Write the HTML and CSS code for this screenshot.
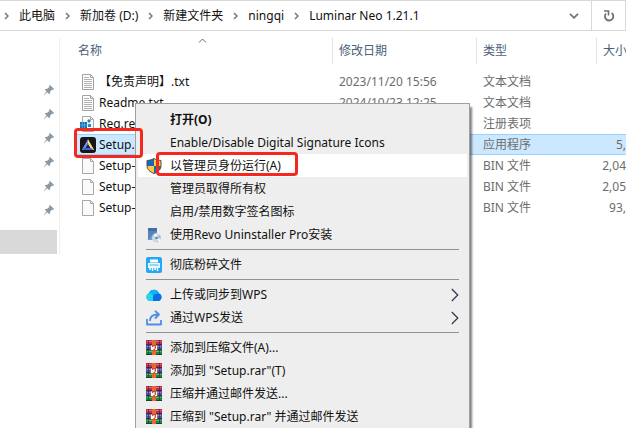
FILE: index.html
```html
<!DOCTYPE html>
<html lang="zh-CN">
<head>
<meta charset="utf-8">
<title>Luminar Neo 1.21.1</title>
<link rel="stylesheet" href="styles.css">
</head>
<body>
<svg class="defs" aria-hidden="true">
  <symbol id="crumb" viewBox="0 0 5 8"><path d="M1 1l3 3-3 3" fill="none" stroke="#777" stroke-width="1.5"/></symbol>
  <symbol id="pin" viewBox="0 0 10 10"><path d="M6 0l4 4-1 1-1-.2L6.200 6.600 6 8.600 5 9 3.300 7.200 .5 9.800 0 9.600 2.600 6.500 1 5l.4-1 2-.2L5.200 2 5 1z" fill="#8c98a3"/></symbol>
  <symbol id="text-file" viewBox="0 0 12 16"><path d="M.5.5h8l3 3v12H.5z" fill="#fdfdfd" stroke="#a2a2a2"/><path d="M8.500 .5v3h3" fill="none" stroke="#a2a2a2"/><path d="M2 3.500h5M2 5.500h8M2 7.500h8M2 9.500h8M2 11.500h8M2 13.500h8" stroke="#b0b0b0"/></symbol>
  <symbol id="blank-file" viewBox="0 0 12 16"><path d="M.5.5h8l3 3v12H.5z" fill="#fafafa" stroke="#a8a8a8"/><path d="M8.500 .5v3h3" fill="none" stroke="#a8a8a8"/></symbol>
  <symbol id="reg-file" viewBox="0 0 16 16"><path d="M2.500 .5h8l3 3v12h-11z" fill="#fafafa" stroke="#a8a8a8"/><path d="M10.500 .5v3h3" fill="none" stroke="#a8a8a8"/><path d="M0 6h7v6H0z" fill="#1174b4"/><path d="M7 5l2-2 2 2-2 2zM8 8h3v3H8z" fill="#1883c3"/><path d="M2.500 6v6M4.500 6v6M0 9h10" stroke="#75bce4" stroke-width=".6"/></symbol>
  <symbol id="luminar" viewBox="0 0 16 16"><rect width="16" height="16" rx="3" fill="#15171c"/><path d="M8 2.500l6 10.500H2z" fill="#f4d36c"/><path d="M8 2.500L2 13h4L9 5z" fill="#648eea"/><path d="M8 7L10.500 11h-5z" fill="#15204f"/><path d="M2 13l2-2h8l1 2z" fill="#3b62c5"/><path d="M8 2.500L14 13l-3-2-3-5z" fill="#ffe17c"/></symbol>
  <symbol id="shield" viewBox="0 0 16 16"><path d="M8 .5c2 1.300 4.500 1.800 7 2v5c0 4-3 6.500-7 8-4-1.500-7-4-7-8v-5c2.500-.2 5-.7 7-2z" fill="#ffc83d"/><path d="M8 .5v7.500H1V2.500c2.500-.2 5-.7 7-2zM8 8h7c-.2 4-3 6-7 7.500z" fill="#1769b8"/><path d="M8 .5c2 1.300 4.500 1.800 7 2v5c0 4-3 6.500-7 8-4-1.500-7-4-7-8v-5c2.500-.2 5-.7 7-2z" fill="none" stroke="#4c4c4c"/></symbol>
  <symbol id="revo" viewBox="0 0 16 16"><path d="M2 1h9v12H2z" fill="#5584bb"/><path d="M2 1h9v3H2z" fill="#426da5"/><path d="M2 13l6-7 3-1v8z" fill="#769bc8"/><circle cx="10.500" cy="11" r="4.500" fill="#cbd8ea"/><path d="M10.500 11L8 7.500l3-1zM10.500 11l4 2-1 2z" fill="#fff"/><path d="M10.500 11l3.500-3 1 3z" fill="#a2bada"/><circle cx="10.500" cy="11" r="1.300" fill="#6388b9"/></symbol>
  <symbol id="shred" viewBox="0 0 16 16"><rect width="16" height="16" rx="2" fill="#21aaf3"/><path d="M4 2.500h8v3H4z" fill="#fff"/><path d="M2 6h12v5H2z" fill="#e9f8ff"/><path d="M3.500 8h9" stroke="#45b8f5"/><path d="M4 10.500V13M6.500 10.500V14M9 10.500V13M11.500 10.500V14" stroke="#fff" stroke-width="1.500"/></symbol>
  <symbol id="cloud" viewBox="0 0 16 16"><path d="M4 14a4 4 0 0 1-1-7.700A5.300 5.300 0 0 1 13 6.500 3.900 3.900 0 0 1 12 14z" fill="#168cf2"/><path d="M4 14a4 4 0 0 1-1-7.700c4-1 5 1 8 7.700z" fill="#27d3ed"/><path d="M7 8.500c2-2.500 4-2.800 6-2A3.900 3.900 0 0 1 12 14H7z" fill="#0870e6"/><path d="M3 6.300A5.300 5.300 0 0 1 13 6.500c-3-.5-4.500.8-6 2.500-1-2-2-2.700-4-2.700z" fill="#16b2f0"/></symbol>
  <symbol id="share" viewBox="0 0 16 16"><path d="M1 9v5.500h14V10M4 11c0-4.500 3-6.500 8-6.500M9 .8l4 3.700-4 4" fill="none" stroke="#4c8eea" stroke-width="1.800" stroke-linejoin="round"/></symbol>
  <symbol id="rar" viewBox="0 0 16 16"><path d="M0 0h16v5H0z" fill="#c42c4c"/><path d="M0 5h16v5H0z" fill="#574fae"/><path d="M0 10h16v5H0z" fill="#178a3c"/><path d="M1 1.500h14" stroke="#e2688a"/><path d="M1 6.500h14" stroke="#958be0"/><path d="M1 11.500h14" stroke="#5bbd68"/><path d="M0 4.500h16M0 9.500h16M0 14.500h16" stroke="#302338" stroke-width=".8"/><path d="M2.500 0v15M13.500 0v15" stroke="#332b3f" stroke-width=".7"/><path d="M6 0h4v15H6z" fill="#e56a2c"/><path d="M4.500 5h7v5.500h-7z" fill="#b34a37"/><path d="M5.500 5.500V9.500h1.300V7M8 6v3M10.500 5.500V9.500H9" fill="none" stroke="#fff" stroke-width="1.200"/></symbol>
  <symbol id="submenu" viewBox="0 0 8 14"><path d="M.8 1l6 6-6 6" fill="none" stroke="#333048" stroke-width="1.200"/></symbol>
</svg>
<div class="explorer">
  <header class="address">
    <nav class="crumbs" aria-label="路径">
      <svg class="crumb-arrow"><use href="#crumb"/></svg><a href="#">此电脑</a>
      <svg class="crumb-arrow"><use href="#crumb"/></svg><a href="#">新加卷 (D:)</a>
      <svg class="crumb-arrow"><use href="#crumb"/></svg><a href="#">新建文件夹</a>
      <svg class="crumb-arrow"><use href="#crumb"/></svg><a href="#">ningqi</a>
      <svg class="crumb-arrow"><use href="#crumb"/></svg><a href="#">Luminar Neo 1.21.1</a>
    </nav>
    <button class="history" aria-label="历史记录"><svg width="10" height="6" viewBox="0 0 10 6"><path d="M1 .8l4 4 4-4" fill="none" stroke="#747474" stroke-width="1.800"/></svg></button>
    <button class="refresh" aria-label="刷新"><svg width="12" height="12" viewBox="0 0 12 12"><path d="M8.700 3A4.200 4.200 0 1 1 3 3.500" fill="none" stroke="#717171" stroke-width="1.800"/><path d="M1 1h4.500v4.500" fill="none" stroke="#717171" stroke-width="1.600"/></svg></button>
  </header>
  <main class="body">
    <aside class="sidebar">
      <ul class="pins">
        <li><svg><use href="#pin"/></svg></li>
        <li><svg><use href="#pin"/></svg></li>
        <li><svg><use href="#pin"/></svg></li>
        <li><svg><use href="#pin"/></svg></li>
        <li><svg><use href="#pin"/></svg></li>
        <li><svg><use href="#pin"/></svg></li>
      </ul>
      <div class="current"></div>
    </aside>
    <section class="files">
      <svg class="sort" viewBox="0 0 8 5"><path d="M.5 4.500L4 1l3.500 3.500" fill="none" stroke="#666"/></svg>
      <table>
        <colgroup><col><col class="col-date"><col class="col-type"><col class="col-size"></colgroup>
        <thead><tr><th>名称</th><th>修改日期</th><th>类型</th><th>大小</th></tr></thead>
        <tbody>
          <tr><td><span class="name"><svg><use href="#text-file"/></svg>【免责声明】.txt</span></td><td>2023/11/20 15:56</td><td>文本文档</td><td></td></tr>
          <tr><td><span class="name"><svg><use href="#text-file"/></svg>Readme.txt</span></td><td>2024/10/23 12:25</td><td>文本文档</td><td></td></tr>
          <tr><td><span class="name"><svg><use href="#reg-file"/></svg>Reg.re</span></td><td></td><td>注册表项</td><td></td></tr>
          <tr class="selected"><td><span class="name"><svg><use href="#luminar"/></svg>Setup.</span></td><td></td><td>应用程序</td><td>5,</td></tr>
          <tr><td><span class="name"><svg><use href="#blank-file"/></svg>Setup-</span></td><td></td><td>BIN 文件</td><td>2,04</td></tr>
          <tr><td><span class="name"><svg><use href="#blank-file"/></svg>Setup-</span></td><td></td><td>BIN 文件</td><td>2,05</td></tr>
          <tr><td><span class="name"><svg><use href="#blank-file"/></svg>Setup-</span></td><td></td><td>BIN 文件</td><td>93,</td></tr>
        </tbody>
      </table>
    </section>
  </main>
  <div class="menu" role="menu">
    <button class="item default" role="menuitem"><span class="icon"></span>打开(O)</button>
    <button class="item" role="menuitem"><span class="icon"></span>Enable/Disable Digital Signature Icons</button>
    <button class="item active" role="menuitem"><svg class="icon"><use href="#shield"/></svg>以管理员身份运行(A)</button>
    <button class="item" role="menuitem"><span class="icon"></span>管理员取得所有权</button>
    <button class="item" role="menuitem"><span class="icon"></span>启用/禁用数字签名图标</button>
    <button class="item" role="menuitem"><svg class="icon"><use href="#revo"/></svg>使用Revo Uninstaller Pro安装</button>
    <hr>
    <button class="item" role="menuitem"><svg class="icon"><use href="#shred"/></svg>彻底粉碎文件</button>
    <hr>
    <button class="item" role="menuitem"><svg class="icon"><use href="#cloud"/></svg>上传或同步到WPS<svg class="arrow"><use href="#submenu"/></svg></button>
    <button class="item" role="menuitem"><svg class="icon"><use href="#share"/></svg>通过WPS发送<svg class="arrow"><use href="#submenu"/></svg></button>
    <hr>
    <button class="item" role="menuitem"><svg class="icon"><use href="#rar"/></svg>添加到压缩文件(A)...</button>
    <button class="item" role="menuitem"><svg class="icon"><use href="#rar"/></svg>添加到 "Setup.rar"(T)</button>
    <button class="item" role="menuitem"><svg class="icon"><use href="#rar"/></svg>压缩并通过邮件发送...</button>
    <button class="item" role="menuitem"><svg class="icon"><use href="#rar"/></svg>压缩到 "Setup.rar" 并通过邮件发送</button>
  </div>
  <div class="mark mark-file"></div>
  <div class="mark mark-command"></div>
</div>
</body>
</html>
```
FILE: styles.css
```css
* { box-sizing: border-box; }

body {
  margin: 0;
  background: #fff;
  color: #111;
  font: 12px/20px "Noto Sans", "Noto Sans CJK SC", sans-serif;
}

button {
  border: 0;
  padding: 0;
  background: none;
  color: inherit;
  font: inherit;
}

.defs { position: absolute; width: 0; height: 0; }

.explorer {
  position: relative;
  height: 100vh;
  overflow: hidden;
}

.address {
  display: flex;
  height: 31px;
  border: 1px solid #d9d9d9;
  border-left: 0;
}

.crumbs {
  display: flex;
  flex: 1;
  align-items: center;
  gap: 10px;
  padding-left: 4px;
  white-space: nowrap;
}

.crumbs a { color: inherit; text-decoration: none; }
.crumb-arrow { width: 5px; height: 8px; }

.history, .refresh {
  display: flex;
  align-items: center;
  justify-content: center;
  width: 34px;
}

.refresh { border-left: 1px solid #d9d9d9; }

.body { display: flex; }

.sidebar {
  width: 60px;
  margin-top: 7px;
  padding-top: 40px;
  border-right: 1px solid #f0f0f0;
}

.pins { margin: 0; padding: 0; list-style: none; }

.pins li {
  display: flex;
  align-items: center;
  justify-content: flex-end;
  height: 24px;
  padding-right: 5px;
}

.pins svg { width: 10px; height: 10px; }

.current {
  height: 24px;
  margin: 8px 2px 0 0;
  background: #d9d9d9;
}

.files {
  position: relative;
  flex: 1;
  min-width: 0;
  padding: 7px 0 0 16px;
}

.sort {
  position: absolute;
  top: 7px;
  left: 138px;
  width: 9px;
  height: 5px;
}

table {
  width: 100%;
  table-layout: fixed;
  border-collapse: separate;
  border-spacing: 0;
}

.col-date { width: 144px; }
.col-type { width: 120px; }
.col-size { width: 30px; }

th, td {
  height: 21px;
  padding: 0 0 0 7px;
  overflow: hidden;
  font-weight: 400;
  text-align: left;
  white-space: nowrap;
}

th {
  height: 26px;
  padding-left: 6px;
  border-left: 1px solid #e2e2e2;
  color: #4c607a;
}

th:first-child { border-left: 0; padding-left: 2px; }

thead::after {
  display: block;
  height: 7px;
  content: "";
}

td { color: #6d6d6d; }
td:first-child { padding-left: 4px; color: #111; }
td:last-child { padding: 0; text-align: right; }

.name { display: flex; align-items: center; gap: 3px; }
.name svg { width: 16px; height: 16px; }

.selected td {
  border: 1px solid #99d1ff;
  border-width: 1px 0;
  background: #cce8ff;
  line-height: 19px;
}

.menu {
  position: absolute;
  top: 103px;
  left: 135px;
  width: 335px;
  padding: 4px 2px;
  border: 1px solid #a0a0a0;
  background: #eee;
  box-shadow: 2px 4px 2px rgba(0, 0, 0, .5);
}

.item {
  display: flex;
  align-items: center;
  width: 100%;
  height: 23px;
  padding: 0 8px;
  text-align: left;
  white-space: nowrap;
}

.default { font-weight: 700; }
.active { background: #fff; }
.icon { width: 16px; height: 16px; margin-right: 8px; }
.arrow { width: 8px; height: 14px; margin-left: auto; }

hr {
  margin: 3px 8px;
  border: 0;
  border-top: 1px solid #919191;
}

.mark {
  position: absolute;
  border: 3px solid #f4281f;
  border-radius: 4px;
}

.mark-file { top: 128px; left: 74px; width: 69px; height: 30px; }
.mark-command { top: 152px; left: 156px; width: 142px; height: 24px; }
```
